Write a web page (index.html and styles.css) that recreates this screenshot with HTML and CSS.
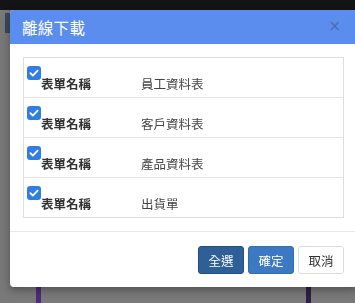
FILE: index.html
```html
<!DOCTYPE html>
<html lang="zh-Hant">
<head>
    <meta charset="UTF-8">
    <meta name="viewport" content="width=device-width, initial-scale=1.0">
    <title>離線下載</title>
    <link rel="stylesheet" href="styles.css">
</head>
<body>
    <div class="page">
        <div class="topbar"></div>
        <div class="backdrop">
            <div class="side-tab"></div>
            <div class="bar bar-left"></div>
            <div class="bar bar-right"></div>
        </div>
    </div>

    <div class="modal">
        <div class="modal-header">
            <span class="modal-title">離線下載</span>
            <span class="close">&times;</span>
        </div>
        <div class="modal-body">
            <div class="form-list">
                <div class="form-row">
                    <span class="check"><svg viewBox="0 0 14 14" width="14" height="14"><path d="M3.4 7.2l2.4 2.4 4.8-5" fill="none" stroke="#fff" stroke-width="1.8" stroke-linecap="round" stroke-linejoin="round"/></svg></span>
                    <span class="label">表單名稱</span>
                    <span class="value">員工資料表</span>
                </div>
                <div class="form-row">
                    <span class="check"><svg viewBox="0 0 14 14" width="14" height="14"><path d="M3.4 7.2l2.4 2.4 4.8-5" fill="none" stroke="#fff" stroke-width="1.8" stroke-linecap="round" stroke-linejoin="round"/></svg></span>
                    <span class="label">表單名稱</span>
                    <span class="value">客戶資料表</span>
                </div>
                <div class="form-row">
                    <span class="check"><svg viewBox="0 0 14 14" width="14" height="14"><path d="M3.4 7.2l2.4 2.4 4.8-5" fill="none" stroke="#fff" stroke-width="1.8" stroke-linecap="round" stroke-linejoin="round"/></svg></span>
                    <span class="label">表單名稱</span>
                    <span class="value">產品資料表</span>
                </div>
                <div class="form-row">
                    <span class="check"><svg viewBox="0 0 14 14" width="14" height="14"><path d="M3.4 7.2l2.4 2.4 4.8-5" fill="none" stroke="#fff" stroke-width="1.8" stroke-linecap="round" stroke-linejoin="round"/></svg></span>
                    <span class="label">表單名稱</span>
                    <span class="value">出貨單</span>
                </div>
            </div>
        </div>
        <div class="modal-footer">
            <button class="btn btn-dark">全選</button>
            <button class="btn btn-primary">確定</button>
            <button class="btn btn-default">取消</button>
        </div>
    </div>
</body>
</html>
```

FILE: styles.css
```css
html, body {
    margin: 0;
    padding: 0;
    height: 100%;
    overflow: hidden;
}
body {
    font-family: "Noto Sans CJK TC", "Noto Sans", sans-serif;
    background: #777;
}
.page {
    height: 100%;
    display: flex;
    flex-direction: column;
}
.topbar {
    height: 10px;
    background: #141414;
}
.backdrop {
    flex: 1;
    position: relative;
    background: #797979;
}
.side-tab {
    position: absolute;
    left: 5px;
    top: 3px;
    width: 5px;
    height: 20px;
    background: #3c4a58;
}
.bar {
    position: absolute;
    bottom: 0;
    width: 5px;
    height: 30px;
}
.bar-left {
    left: 36px;
    background: #4b2c7a;
}
.bar-right {
    left: 306px;
    background: #2e1f4a;
}

/* dialog */
.modal {
    position: fixed;
    top: 10px;
    left: 10px;
    width: 348px;
    background: #fff;
    border-radius: 4px;
    overflow: hidden;
    box-shadow: 0 3px 8px rgba(0,0,0,0.35);
}
.modal-header {
    height: 34px;
    background: #5b8def;
    display: flex;
    align-items: center;
    justify-content: space-between;
    padding: 0 12px 0 12px;
}
.modal-title {
    color: #fff;
    font-size: 15.5px;
    letter-spacing: 0.3px;
}
.close {
    color: #4b6fb0;
    font-family: "DejaVu Sans", sans-serif;
    font-size: 15px;
    margin-right: 5px;
    margin-top: -2px;
}
.modal-body {
    padding: 13px 14px 13px 13px;
}
.form-list {
    border: 1px solid #dedede;
}
.form-row {
    height: 39px;
    display: flex;
    align-items: flex-start;
    padding-left: 3px;
    border-bottom: 1px solid #e6e6e6;
    font-size: 12.5px;
    line-height: 12px;
}
.form-row:last-child {
    border-bottom: none;
}
.check {
    width: 14px;
    height: 14px;
    margin-top: 8px;
    border-radius: 3px;
    background: #2f7ee3;
    display: flex;
}
.label {
    width: 100px;
    margin-top: 20px;
    font-weight: bold;
    color: #333;
}
.value {
    margin-top: 20px;
    color: #444;
}
.modal-footer {
    border-top: 1px solid #e8e8e8;
    padding: 14px 14px 13px 0;
    display: flex;
    justify-content: flex-end;
    gap: 4px;
}
.btn {
    width: 46px;
    height: 28px;
    border-radius: 3px;
    font-family: "Noto Sans CJK TC", sans-serif;
    font-size: 12.5px;
    padding: 0;
    border: 1px solid transparent;
}
.btn-dark {
    background: #2e6097;
    border-color: #244f80;
    color: #fff;
}
.btn-primary {
    background: #3b79c2;
    border-color: #336bae;
    color: #fff;
}
.btn-default {
    background: #fff;
    border-color: #ddd;
    color: #333;
}
```
